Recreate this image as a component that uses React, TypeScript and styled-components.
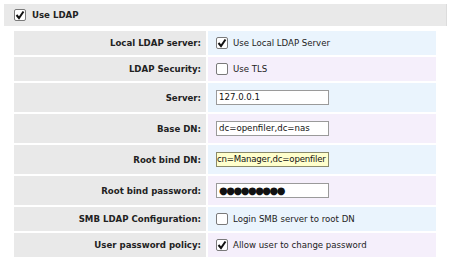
import styled, { createGlobalStyle } from "styled-components";

type Row = {
	label: string;
	kind: "check" | "text" | "password";
	value: string;
	checked?: boolean;
	focused?: boolean;
};

const rows: Row[] = [
	{ label: "Local LDAP server:", kind: "check", value: "Use Local LDAP Server", checked: true },
	{ label: "LDAP Security:", kind: "check", value: "Use TLS" },
	{ label: "Server:", kind: "text", value: "127.0.0.1" },
	{ label: "Base DN:", kind: "text", value: "dc=openfiler,dc=nas" },
	{ label: "Root bind DN:", kind: "text", value: "cn=Manager,dc=openfiler", focused: true },
	{ label: "Root bind password:", kind: "password", value: "●●●●●●●●●" },
	{ label: "SMB LDAP Configuration:", kind: "check", value: "Login SMB server to root DN" },
	{ label: "User password policy:", kind: "check", value: "Allow user to change password", checked: true },
];

const Check = ({ checked }: { checked?: boolean }) => (
	<Box>
		{checked && (
			<svg width="10" height="10" viewBox="0 0 10 10">
				<path d="M1.5 5 L4 8 L8.5 1.5" fill="none" stroke="#111" strokeWidth="2" />
			</svg>
		)}
	</Box>
);

const App = () => {
	return (
		<>
			<GlobalStyle />
			<Page>
				<Header>
					<Check checked />
					<HeaderTitle>Use LDAP</HeaderTitle>
				</Header>
				<Grid>
					{rows.map((row, i) => (
						<Fragment key={row.label}>
							<Label $tall={row.kind !== "check"}>{row.label}</Label>
							<Value $alt={i % 2 === 1} $tall={row.kind !== "check"}>
								{row.kind === "check" ? (
									<>
										<Check checked={row.checked} />
										<CheckText>{row.value}</CheckText>
									</>
								) : (
									<Field $focused={row.focused} $password={row.kind === "password"}>
										{row.value}
									</Field>
								)}
							</Value>
						</Fragment>
					))}
				</Grid>
			</Page>
		</>
	);
};

const Fragment = ({ children }: { children: React.ReactNode }) => <>{children}</>;

const GlobalStyle = createGlobalStyle`
	body {
		margin: 0;
		background: #ffffff;
		font-family: "DejaVu Sans", Verdana, sans-serif;
		color: #222;
	}
`;

const Page = styled.div`
	padding: 4px 3px 0 4px;
`;

const Header = styled.div`
	display: flex;
	align-items: center;
	gap: 6px;
	width: 443px;
	height: 22px;
	box-sizing: border-box;
	padding-left: 10px;
	background: #e9e9e9;
	border-right: 1px solid #dcdcdc;
`;

const HeaderTitle = styled.span`
	font-size: 8.6px;
	font-weight: bold;
	color: #222;
`;

const Grid = styled.div`
	display: grid;
	grid-template-columns: 192px 228px;
	gap: 2px;
	margin: 5px 0 0 10px;
`;

const Label = styled.div<{ $tall?: boolean }>`
	height: ${(p) => (p.$tall ? 29 : 24)}px;
	display: flex;
	align-items: center;
	justify-content: flex-end;
	padding-right: 5px;
	background: #e9e9e9;
	font-size: 8.6px;
	font-weight: bold;
	color: #222;
`;

const Value = styled.div<{ $alt?: boolean; $tall?: boolean }>`
	height: ${(p) => (p.$tall ? 29 : 24)}px;
	display: flex;
	align-items: center;
	gap: 5px;
	padding-left: 8px;
	background: ${(p) => (p.$alt ? "#f5effb" : "#eaf4fd")};
`;

const Box = styled.span`
	display: inline-flex;
	align-items: center;
	justify-content: center;
	width: 12px;
	height: 12px;
	box-sizing: border-box;
	border: 1px solid #7a7a7a;
	border-radius: 2px;
	background: #ffffff;
`;

const CheckText = styled.span`
	font-size: 8.6px;
	color: #222;
`;

const Field = styled.div<{ $focused?: boolean; $password?: boolean }>`
	width: 113px;
	height: 15px;
	box-sizing: border-box;
	border: 1px solid ${(p) => (p.$focused ? "#8a8a6a" : "#9a9a9a")};
	background: ${(p) => (p.$focused ? "#ffffcc" : "#ffffff")};
	padding-left: ${(p) => (p.$focused ? 0 : 2)}px;
	overflow: hidden;
	white-space: nowrap;
	font-size: ${(p) => (p.$password ? 10 : 8.6)}px;
	line-height: 13px;
	letter-spacing: ${(p) => (p.$password ? "-1.5px" : p.$focused ? "-0.2px" : "0")};
	color: #111;
`;

export default App;
